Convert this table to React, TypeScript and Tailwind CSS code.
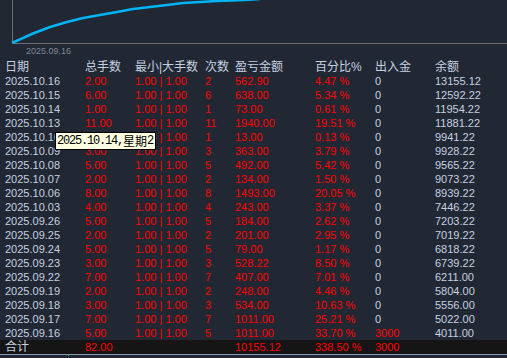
import React from "react";

type Row = [string, string, string, string, string, string, string];

const rows: Row[] = [
  ["2025.10.16", "2.00", "2", "562.90", "4.47 %", "0", "13155.12"],
  ["2025.10.15", "6.00", "6", "638.00", "5.34 %", "0", "12592.22"],
  ["2025.10.14", "1.00", "1", "73.00", "0.61 %", "0", "11954.22"],
  ["2025.10.13", "11.00", "11", "1940.00", "19.51 %", "0", "11881.22"],
  ["2025.10.10", "1.00", "1", "13.00", "0.13 %", "0", "9941.22"],
  ["2025.10.09", "3.00", "3", "363.00", "3.79 %", "0", "9928.22"],
  ["2025.10.08", "5.00", "5", "492.00", "5.42 %", "0", "9565.22"],
  ["2025.10.07", "2.00", "2", "134.00", "1.50 %", "0", "9073.22"],
  ["2025.10.06", "8.00", "8", "1493.00", "20.05 %", "0", "8939.22"],
  ["2025.10.03", "4.00", "4", "243.00", "3.37 %", "0", "7446.22"],
  ["2025.09.26", "5.00", "5", "184.00", "2.62 %", "0", "7203.22"],
  ["2025.09.25", "2.00", "2", "201.00", "2.95 %", "0", "7019.22"],
  ["2025.09.24", "5.00", "5", "79.00", "1.17 %", "0", "6818.22"],
  ["2025.09.23", "3.00", "3", "528.22", "8.50 %", "0", "6739.22"],
  ["2025.09.22", "7.00", "7", "407.00", "7.01 %", "0", "6211.00"],
  ["2025.09.19", "2.00", "2", "248.00", "4.46 %", "0", "5804.00"],
  ["2025.09.18", "3.00", "3", "534.00", "10.63 %", "0", "5556.00"],
  ["2025.09.17", "7.00", "7", "1011.00", "25.21 %", "0", "5022.00"],
  ["2025.09.16", "5.00", "5", "1011.00", "33.70 %", "3000", "4011.00"],
];

const grid =
  "grid grid-cols-[80px_50px_70px_30px_80px_60px_60px_1fr] pl-[5px] whitespace-nowrap";

const curve =
  "12,43 33,33.5 50,27 67,22 83,18 100,15 117,12 133,9 150,7 167,5 183,3 200,2 217,1 245,0 260,-1";

export default function App() {
  return (
    <div className="relative h-[358px] w-[507px] overflow-hidden bg-[#212833] font-['Liberation_Sans','Noto_Sans_CJK_SC',sans-serif] text-[#c6d0e0]">
      <svg width="507" height="44" className="block">
        <line x1="12.5" y1="0" x2="12.5" y2="44" stroke="#6e6e70" strokeWidth="1" />
        <line x1="12" y1="43.5" x2="507" y2="43.5" stroke="#6e6e70" strokeWidth="1" />
        <polyline
          points={curve}
          fill="none"
          stroke="#00b4f8"
          strokeWidth="2.5"
          strokeLinejoin="round"
        />
      </svg>
      <div className="h-[16px] pl-[26px] pt-[1px] text-[9px] leading-[12px] text-[#7d8796]">
        2025.09.16
      </div>

      <div className={`${grid} h-[14px] text-[12px] leading-[14px]`}>
        <div>日期</div>
        <div>总手数</div>
        <div>最小|大手数</div>
        <div>次数</div>
        <div>盈亏金额</div>
        <div>百分比%</div>
        <div>出入金</div>
        <div>余额</div>
      </div>

      {rows.map((r) => (
        <div key={r[0]} className={`${grid} h-[14px] text-[11px] leading-[14px]`}>
          <div>{r[0]}</div>
          <div className="text-[#ff0000]">{r[1]}</div>
          <div className="text-[#ff0000]">1.00 | 1.00</div>
          <div className="text-[#ff0000]">{r[2]}</div>
          <div className="text-[#ff0000]">{r[3]}</div>
          <div className="text-[#ff0000]">{r[4]}</div>
          <div className={r[5] === "0" ? "" : "text-[#ff0000]"}>{r[5]}</div>
          <div>{r[6]}</div>
        </div>
      ))}

      <div className={`${grid} h-[14px] bg-[#151515] text-[11px] leading-[14px]`}>
        <div className="text-[12px]">合计</div>
        <div className="text-[#ff0000]">82.00</div>
        <div />
        <div />
        <div className="text-[#ff0000]">10155.12</div>
        <div className="text-[#ff0000]">338.50 %</div>
        <div className="text-[#ff0000]">3000</div>
        <div />
      </div>
      <div className="h-px bg-[#8a9ab0]" />

      <div className="absolute left-[68px] top-[354px] h-[2px] w-px bg-[#22c55e]" />

      <div className="absolute left-[55px] top-[132px] flex h-[18px] w-[101px] items-center border border-black bg-[#ffffe1] pl-[1px] font-['Liberation_Mono',monospace] text-[12px] leading-[16px] tracking-[-1.2px] text-black whitespace-nowrap">
        <span>2025.10.14,</span>
        <span className="font-['Noto_Sans_CJK_SC',sans-serif] text-[12px] tracking-normal">星期</span>
        <span>2</span>
      </div>
    </div>
  );
}
